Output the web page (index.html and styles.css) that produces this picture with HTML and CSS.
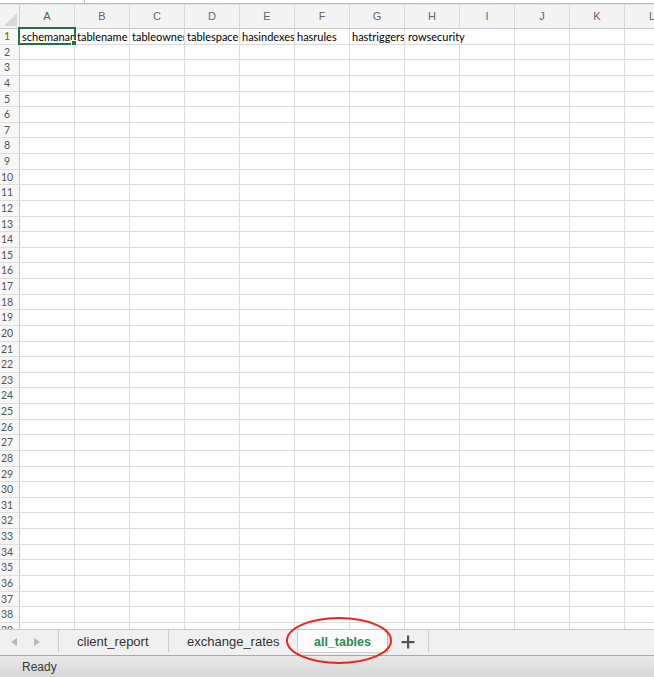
FILE: index.html
```html
<!DOCTYPE html>
<html>
<head>
<meta charset="utf-8">
<link rel="stylesheet" href="styles.css">
</head>
<body>
<div class="app">
  <div class="topbar"><span class="tick"></span></div>
  <div class="sheet">
    <div class="colhead">
      <div class="corner"><span class="tri"></span></div>
      <div class="ch active">A</div><div class="ch">B</div><div class="ch">C</div><div class="ch">D</div><div class="ch">E</div><div class="ch">F</div><div class="ch">G</div><div class="ch">H</div><div class="ch">I</div><div class="ch">J</div><div class="ch">K</div><div class="ch">L</div>
    </div>
    <div class="row">
      <div class="rn active">1</div>
      <div class="cells first">
        <div class="cell">schemaname</div><div class="cell">tablename</div><div class="cell">tableowner</div><div class="cell">tablespace</div><div class="cell">hasindexes</div><div class="cell">hasrules</div><div class="cell">hastriggers</div><div class="cell spill">rowsecurity</div><div class="cell"></div><div class="cell"></div><div class="cell"></div><div class="cell"></div>
      </div>
    </div>
    <div class="row"><div class="rn">2</div><div class="cells"></div></div>
    <div class="row"><div class="rn">3</div><div class="cells"></div></div>
    <div class="row"><div class="rn">4</div><div class="cells"></div></div>
    <div class="row"><div class="rn">5</div><div class="cells"></div></div>
    <div class="row"><div class="rn">6</div><div class="cells"></div></div>
    <div class="row"><div class="rn">7</div><div class="cells"></div></div>
    <div class="row"><div class="rn">8</div><div class="cells"></div></div>
    <div class="row"><div class="rn">9</div><div class="cells"></div></div>
    <div class="row"><div class="rn">10</div><div class="cells"></div></div>
    <div class="row"><div class="rn">11</div><div class="cells"></div></div>
    <div class="row"><div class="rn">12</div><div class="cells"></div></div>
    <div class="row"><div class="rn">13</div><div class="cells"></div></div>
    <div class="row"><div class="rn">14</div><div class="cells"></div></div>
    <div class="row"><div class="rn">15</div><div class="cells"></div></div>
    <div class="row"><div class="rn">16</div><div class="cells"></div></div>
    <div class="row"><div class="rn">17</div><div class="cells"></div></div>
    <div class="row"><div class="rn">18</div><div class="cells"></div></div>
    <div class="row"><div class="rn">19</div><div class="cells"></div></div>
    <div class="row"><div class="rn">20</div><div class="cells"></div></div>
    <div class="row"><div class="rn">21</div><div class="cells"></div></div>
    <div class="row"><div class="rn">22</div><div class="cells"></div></div>
    <div class="row"><div class="rn">23</div><div class="cells"></div></div>
    <div class="row"><div class="rn">24</div><div class="cells"></div></div>
    <div class="row"><div class="rn">25</div><div class="cells"></div></div>
    <div class="row"><div class="rn">26</div><div class="cells"></div></div>
    <div class="row"><div class="rn">27</div><div class="cells"></div></div>
    <div class="row"><div class="rn">28</div><div class="cells"></div></div>
    <div class="row"><div class="rn">29</div><div class="cells"></div></div>
    <div class="row"><div class="rn">30</div><div class="cells"></div></div>
    <div class="row"><div class="rn">31</div><div class="cells"></div></div>
    <div class="row"><div class="rn">32</div><div class="cells"></div></div>
    <div class="row"><div class="rn">33</div><div class="cells"></div></div>
    <div class="row"><div class="rn">34</div><div class="cells"></div></div>
    <div class="row"><div class="rn">35</div><div class="cells"></div></div>
    <div class="row"><div class="rn">36</div><div class="cells"></div></div>
    <div class="row"><div class="rn">37</div><div class="cells"></div></div>
    <div class="row"><div class="rn">38</div><div class="cells"></div></div>
    <div class="row"><div class="rn">39</div><div class="cells"></div></div>
    <div class="row"><div class="rn">40</div><div class="cells"></div></div>
    <div class="selection"><span class="handle"></span></div>
  </div>
  <div class="tabbar">
    <div class="nav">
      <svg class="arrow" width="6" height="8" viewBox="0 0 6 8"><polygon points="6,0 6,8 0,4" fill="#b9b9b9"/></svg>
      <svg class="arrow" width="6" height="8" viewBox="0 0 6 8"><polygon points="0,0 0,8 6,4" fill="#b9b9b9"/></svg>
    </div>
    <div class="tab t1">client_report</div>
    <div class="tab t2">exchange_rates</div>
    <div class="tab current">all_tables</div>
    <div class="tab add">
      <svg width="14" height="14" viewBox="0 0 14 14"><rect x="6" y="0.5" width="2.2" height="13" fill="#555"/><rect x="0.5" y="6" width="13" height="2.2" fill="#555"/></svg>
    </div>
    <svg class="ring" width="108" height="50" viewBox="0 0 108 50"><ellipse cx="54" cy="24.5" rx="52" ry="22.5" fill="none" stroke="#e8261c" stroke-width="2"/></svg>
  </div>
  <div class="status">Ready</div>
</div>
</body>
</html>
```

FILE: styles.css
```css
html, body {
  margin: 0;
  padding: 0;
  background: #ffffff;
}
.app {
  width: 654px;
  height: 677px;
  overflow: hidden;
  position: relative;
  font-family: "Liberation Sans", Arial, sans-serif;
}
.topbar {
  height: 3px;
  border-bottom: 1px solid #bcbcbc;
  position: relative;
  background: #fff;
}
.tick {
  position: absolute;
  left: 84px;
  top: 0;
  width: 1px;
  height: 3px;
  background: #c4c4c4;
}
.sheet {
  height: 625px;
  overflow: hidden;
  position: relative;
  background: #fff;
}
.colhead {
  display: flex;
  height: 25px;
  box-sizing: border-box;
  border-bottom: 1px solid #c9c9c9;
  border-top: 1px solid #e2e2e2;
  background: #f3f3f3;
  width: 700px;
}
.corner {
  flex: 0 0 20px;
  box-sizing: border-box;
  border-right: 1px solid #cfcfcf;
  position: relative;
}
.tri {
  position: absolute;
  right: 2px;
  bottom: 2px;
  width: 0;
  height: 0;
  border-left: 13px solid transparent;
  border-bottom: 13px solid #d7d7d7;
}
.ch {
  flex: 0 0 55px;
  box-sizing: border-box;
  border-right: 1px solid #d9d9d9;
  text-align: center;
  font-size: 11px;
  line-height: 23px;
  color: #666;
}
.ch.active {
  color: #1f7a45;
}
.row {
  display: flex;
  height: 15.64px;
  box-sizing: border-box;
  width: 700px;
}
.rn {
  flex: 0 0 20px;
  box-sizing: border-box;
  border-right: 1px solid #c6c6c6;
  border-bottom: 1px solid #dedede;
  background: #f7f7f7;
  font-family: Lato, "Liberation Sans", sans-serif;
  font-size: 10.5px;
  color: #555;
  text-align: center;
  padding-right: 5px;
  line-height: 15px;
  overflow: hidden;
}
.rn.active {
  color: #1f7a45;
}
.cells {
  flex: 1;
  display: flex;
  box-sizing: border-box;
  border-bottom: 1px solid #dcdcdc;
  background-image: repeating-linear-gradient(to right, transparent 0 54px, #dcdcdc 54px 55px);
}
.cells.first {
  background-image: none;
}
.cell {
  flex: 0 0 55px;
  min-width: 0;
  box-sizing: border-box;
  border-right: 1px solid #dcdcdc;
  padding-left: 2px;
  font-family: Lato, "Liberation Sans", sans-serif;
  font-size: 11px;
  line-height: 15px;
  color: #000;
  white-space: nowrap;
  overflow: hidden;
}
.cell.spill {
  overflow: visible;
  border-right-color: transparent;
  padding-left: 3px;
}
.selection {
  position: absolute;
  left: 18px;
  top: 23px;
  width: 58px;
  height: 18px;
  box-sizing: border-box;
  border: 2px solid #1f7244;
}
.handle {
  position: absolute;
  right: -3px;
  bottom: -3px;
  width: 4px;
  height: 4px;
  background: #1f7244;
  border: 1px solid #fff;
}
.tabbar {
  height: 26px;
  box-sizing: border-box;
  border-top: 1px solid #c9c9c9;
  background: #f0f0f0;
  display: flex;
  align-items: flex-start;
  position: relative;
}
.nav {
  flex: 0 0 59px;
  height: 22px;
  box-sizing: border-box;
  border-right: 1px solid #cbcbcb;
  display: flex;
  align-items: center;
  padding-left: 11px;
  padding-top: 2px;
  gap: 17px;
}
.arrow {
  display: block;
}
.tab {
  height: 22px;
  box-sizing: border-box;
  border-right: 1px solid #cbcbcb;
  font-size: 13px;
  line-height: 24px;
  color: #333;
  white-space: nowrap;
}
.t1 {
  width: 110px;
  padding-left: 18px;
}
.t2 {
  width: 129px;
  padding-left: 18px;
}
.current {
  width: 90px;
  height: 23px;
  background: #fcfcfc;
  border-right: 1px solid #b5b5b5;
  border-bottom: 1px solid #d0d0d0;
  font-weight: bold;
  font-size: 12.5px;
  color: #2a8a4f;
  text-align: center;
  line-height: 24px;
}
.add {
  width: 41px;
  display: flex;
  align-items: center;
  justify-content: center;
  padding-top: 2px;
}
.ring {
  position: absolute;
  left: 285px;
  top: -14px;
}
.status {
  height: 22px;
  box-sizing: border-box;
  border-top: 1px solid #a9a9a9;
  background: linear-gradient(#e9e9e9, #d6d6d6);
  padding-left: 22px;
  padding-top: 1px;
  font-size: 12px;
  line-height: 21px;
  color: #3a3a3a;
}
```
